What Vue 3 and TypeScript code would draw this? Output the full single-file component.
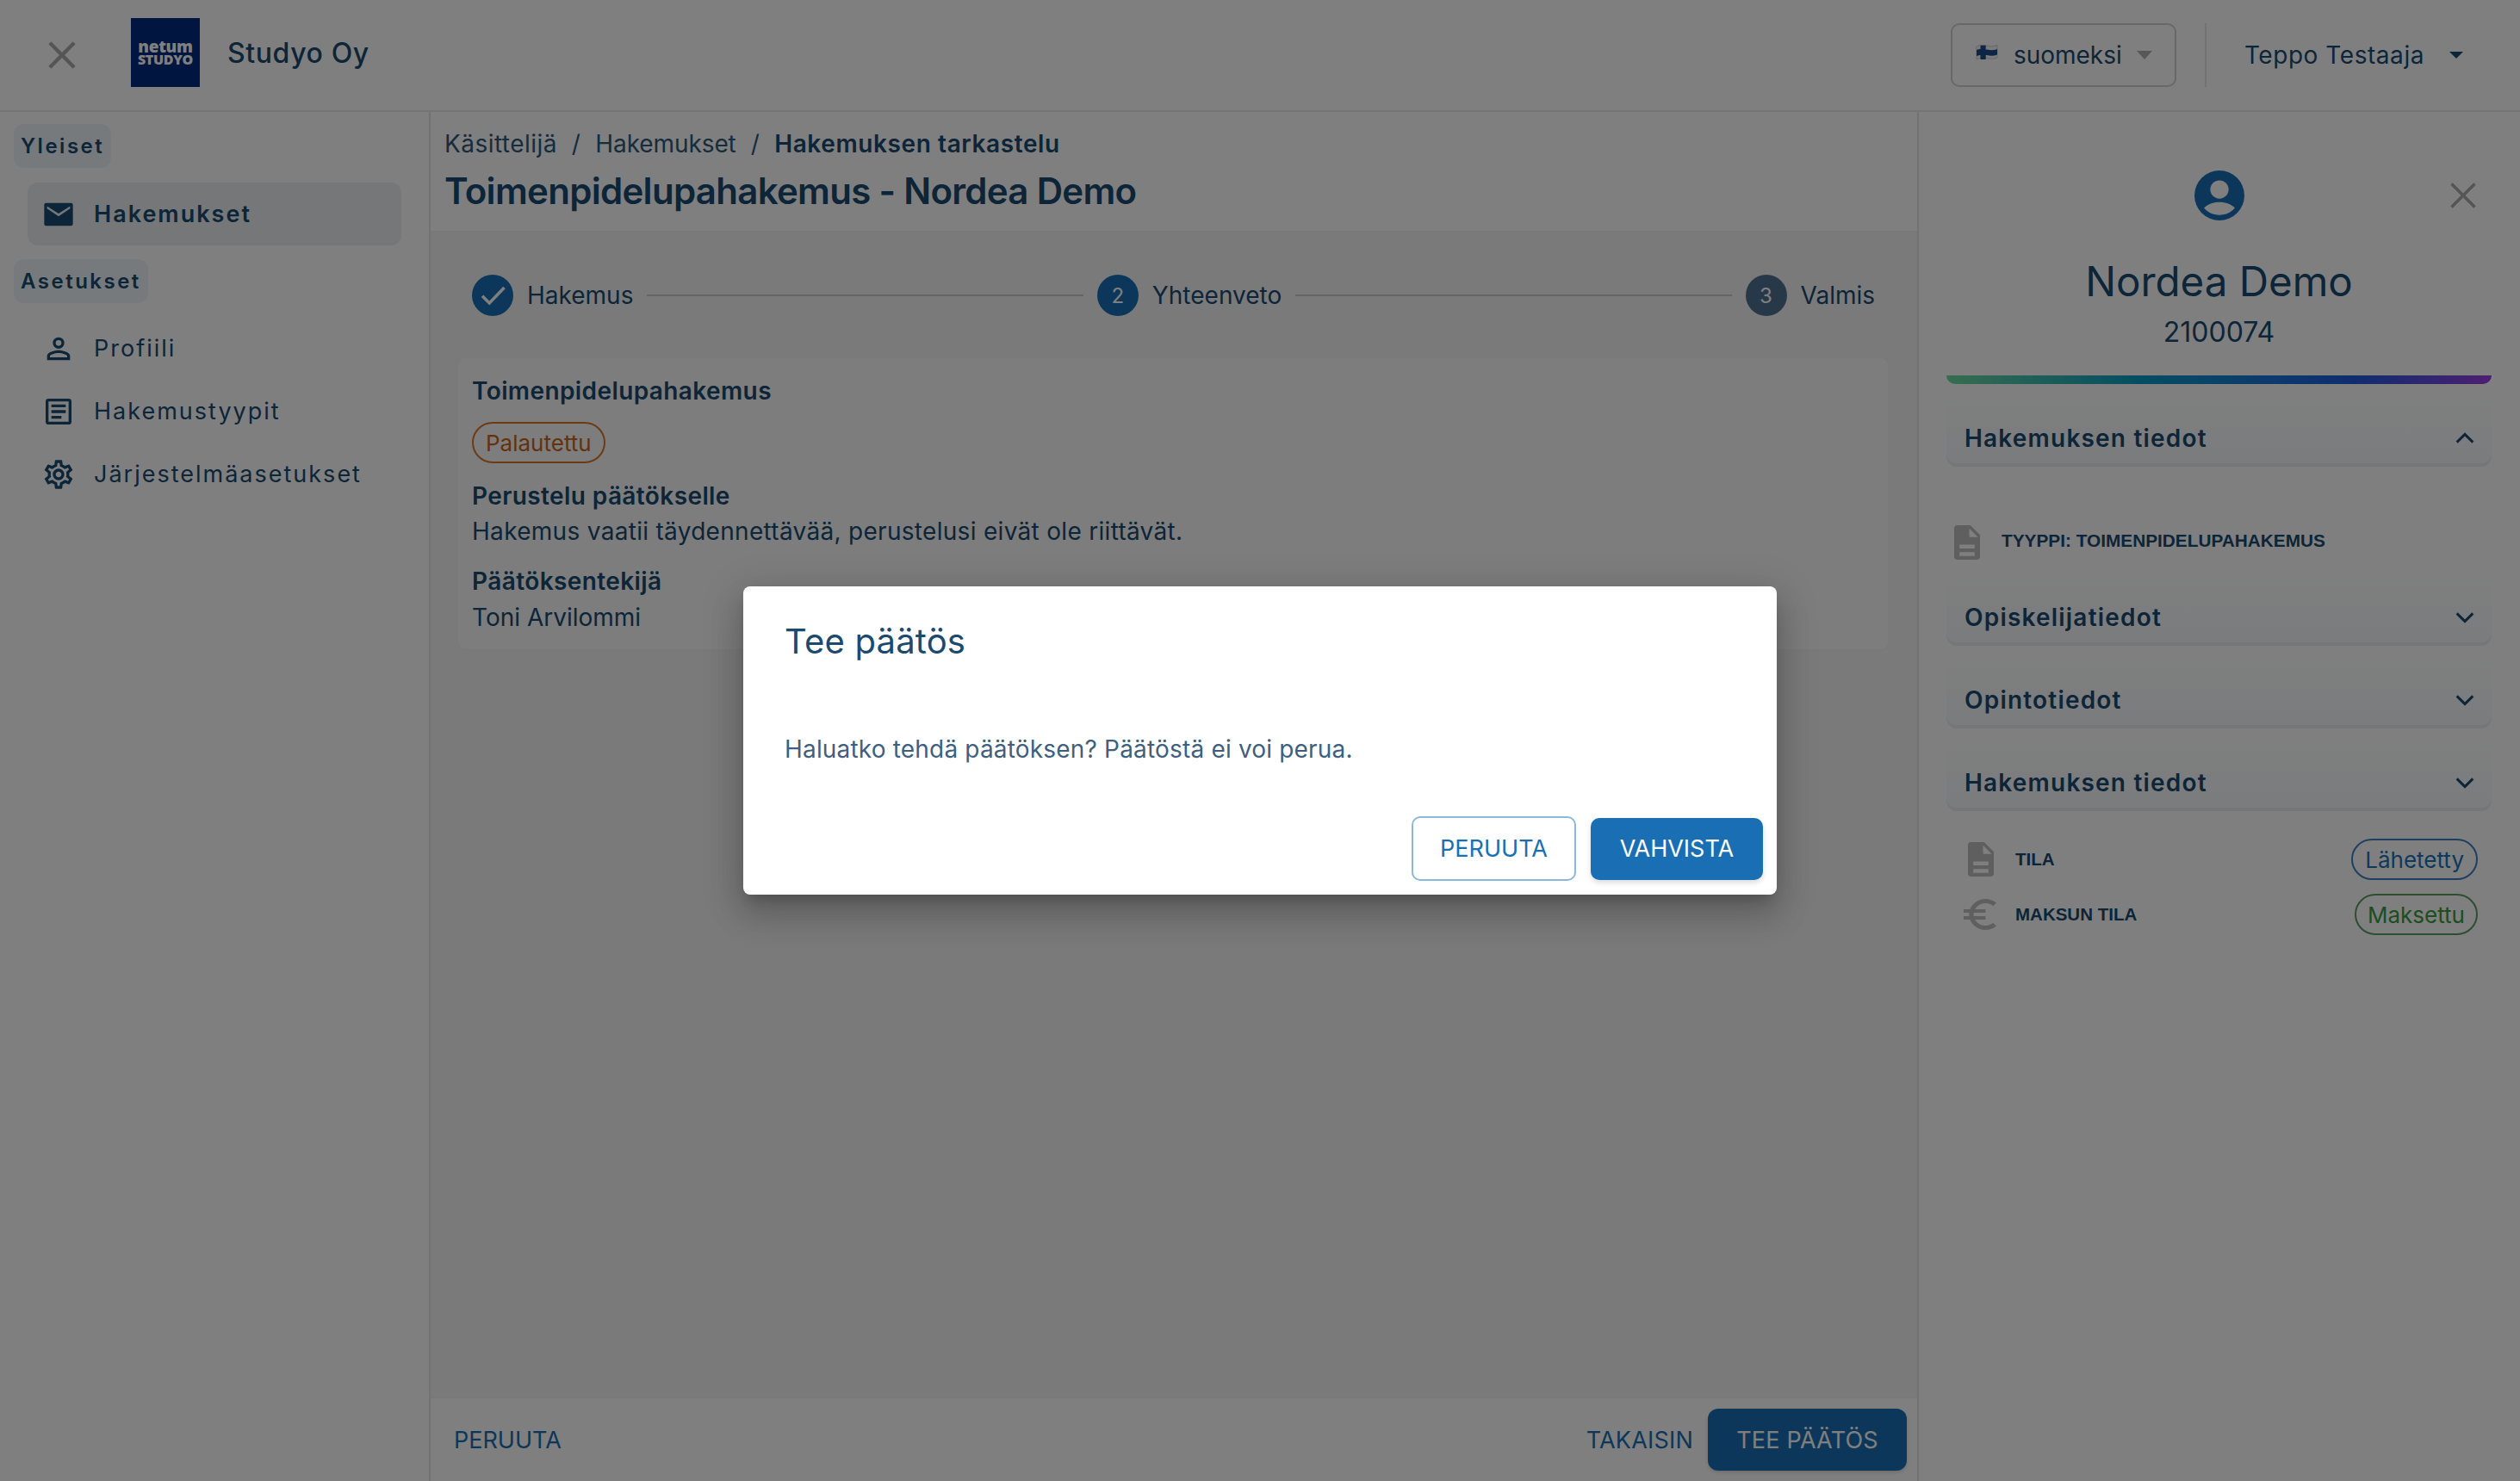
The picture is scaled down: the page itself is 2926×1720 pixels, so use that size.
<script setup lang="ts">
const sections: string[] = ['Opiskelijatiedot', 'Opintotiedot'];
</script>

<template>
  <div class="page">
    <header class="topbar">
      <div class="brand">
        <svg class="menu-x" viewBox="0 0 24 24"><path d="M3.500 3.500 20.500 20.500M20.500 3.500 3.500 20.500" /></svg>
        <div class="logo"><span class="logo-a">netum</span><span class="logo-b">STUDYO</span></div>
        <span class="org">Studyo Oy</span>
      </div>
      <div class="top-right">
        <div class="lang">
          <svg class="flag" viewBox="0 0 24 18"><path d="M0 2c4-2 8-2 12-.800S20 2 24 .5V15c-4 1.700-8 1.700-12 .500S4 15 0 17z" fill="#f6f6f6" stroke="#b4b4b4" stroke-width=".6" /><path d="M0 6c4-1.500 8-1.500 12-.500S20 6.500 24 5v6.500c-4 1.500-8 1.500-12 .500S4 11.500 0 13zM4.500.8h6.200v16.200H4.500z" fill="#1c4a8c" /></svg>
          <span>suomeksi</span>
          <i class="caret grey"></i>
        </div>
        <div class="vr"></div>
        <div class="user"><span>Teppo Testaaja</span><i class="caret dark"></i></div>
      </div>
    </header>

    <div class="body">
      <aside class="side">
        <div class="group-label">Yleiset</div>
        <div class="nav active">
          <svg viewBox="-2 -2 36 36" class="nav-ic"><path fill="#1b4a70" d="M3 4h26a2 2 0 0 1 2 2v20a2 2 0 0 1-2 2H3a2 2 0 0 1-2-2V6a2 2 0 0 1 2-2zm1 6 12 8 12-8V7.500L16 15 4 7.500z" /></svg>
          <span>Hakemukset</span>
        </div>
        <div class="group-label second">Asetukset</div>
        <div class="nav">
          <svg viewBox="0 0 24 24" class="nav-ic"><path fill="#1b4a70" d="M12 6a2 2 0 1 1 0 4 2 2 0 0 1 0-4m0 9c2.700 0 5.800 1.290 6 2v1H6v-1c.2-.71 3.300-2 6-2M12 4a4 4 0 1 0 0 8 4 4 0 0 0 0-8zm0 9c-2.670 0-8 1.340-8 4v3h16v-3c0-2.660-5.330-4-8-4z" /></svg>
          <span>Profiili</span>
        </div>
        <div class="nav">
          <svg viewBox="0 0 24 24" class="nav-ic"><path fill="#1b4a70" d="M19 5v14H5V5h14m0-2H5a2 2 0 0 0-2 2v14a2 2 0 0 0 2 2h14a2 2 0 0 0 2-2V5a2 2 0 0 0-2-2zM7 7h10v2H7zm0 4h10v2H7zm0 4h7v2H7z" /></svg>
          <span>Hakemustyypit</span>
        </div>
        <div class="nav">
          <svg viewBox="0 0 24 24" class="nav-ic"><path fill="#1b4a70" d="M19.430 12.980c.04-.32.07-.64.07-.98s-.03-.66-.07-.98l2.110-1.650c.19-.15.240-.42.120-.64l-2-3.460c-.12-.22-.39-.3-.61-.22l-2.490 1c-.52-.4-1.080-.73-1.690-.98l-.38-2.650A.488.488 0 0 0 14 2h-4c-.25 0-.46.18-.49.42l-.38 2.650c-.61.25-1.170.59-1.690.98l-2.490-1a.566.566 0 0 0-.61.22l-2 3.460c-.13.22-.07.49.12.64l2.110 1.650c-.04.32-.07.65-.07.98s.03.66.07.98l-2.110 1.650c-.19.15-.24.42-.12.64l2 3.460c.12.22.39.3.61.22l2.490-1c.52.4 1.080.73 1.690.98l.38 2.650c.03.24.24.42.49.42h4c.25 0 .46-.18.49-.42l.38-2.650c.61-.25 1.170-.59 1.690-.98l2.490 1c.23.09.49 0 .61-.22l2-3.460c.12-.22.07-.49-.12-.64l-2.110-1.650zM17.450 11.270c.04.31.05.52.05.73 0 .21-.02.43-.05.73l-.14 1.130.89.7 1.080.84-.7 1.210-1.270-.51-1.040-.42-.9.68c-.43.32-.84.56-1.250.73l-1.060.43-.16 1.130-.2 1.350h-1.400l-.19-1.350-.16-1.130-1.060-.43c-.43-.18-.83-.41-1.230-.71l-.91-.7-1.060.43-1.270.51-.7-1.210 1.080-.84.89-.7-.14-1.130c-.03-.31-.05-.54-.05-.74s.02-.43.05-.73l.14-1.130-.89-.7-1.080-.84.7-1.210 1.270.51 1.040.42.9-.68c.43-.32.84-.56 1.250-.73l1.060-.43.16-1.130.2-1.350h1.390l.19 1.350.16 1.130 1.060.43c.43.18.83.41 1.230.71l.91.7 1.060-.43 1.270-.51.7 1.210-1.070.85-.89.7.14 1.130zM12 8c-2.210 0-4 1.790-4 4s1.790 4 4 4 4-1.790 4-4-1.790-4-4-4zm0 6c-1.100 0-2-.9-2-2s.9-2 2-2 2 .9 2 2-.9 2-2 2z" /></svg>
          <span>Järjestelmäasetukset</span>
        </div>
      </aside>

      <main class="main">
        <div class="title-block">
          <nav class="crumbs">
            <span>Käsittelijä</span><span class="slash">/</span><span class="crumb-mid">Hakemukset</span><span class="slash">/</span><b>Hakemuksen tarkastelu</b>
          </nav>
          <h1>Toimenpidelupahakemus - Nordea Demo</h1>
        </div>

        <div class="content">
          <div class="stepper">
            <span class="dot done"><svg viewBox="0 0 24 24"><path d="M4 12.500l5.500 5.500L21 6" /></svg></span>
            <span class="step-label">Hakemus</span>
            <span class="line"></span>
            <span class="dot cur">2</span>
            <span class="step-label">Yhteenveto</span>
            <span class="line"></span>
            <span class="dot next">3</span>
            <span class="step-label">Valmis</span>
          </div>

          <section class="card">
            <div class="card-title">Toimenpidelupahakemus</div>
            <span class="chip chip-orange">Palautettu</span>
            <div class="field-title">Perustelu päätökselle</div>
            <div class="field-text">Hakemus vaatii täydennettävää, perustelusi eivät ole riittävät.</div>
            <div class="field-title maker">Päätöksentekijä</div>
            <div class="field-text toni">Toni Arvilommi</div>
          </section>
        </div>

        <footer class="actions">
          <span class="txt-btn">PERUUTA</span>
          <div class="actions-right">
            <span class="txt-btn">TAKAISIN</span>
            <span class="solid-btn">TEE PÄÄTÖS</span>
          </div>
        </footer>
      </main>

      <aside class="panel">
        <div class="panel-head">
          <svg class="avatar" viewBox="0 0 60 60"><circle cx="30" cy="30" r="30" fill="#1a6fb4" /><circle cx="30" cy="22.800" r="11" fill="#fff" /><path d="M11.500 45c4-4.500 11-7 18.500-7s14.500 2.500 18.500 7c-4 5-11 8.500-18.500 8.500S15.500 50 11.500 45z" fill="#fff" /></svg>
          <svg class="panel-x" viewBox="0 0 24 24"><path d="M3 3 21 21M21 3 3 21" /></svg>
        </div>
        <div class="p-name">Nordea Demo</div>
        <div class="p-num">2100074</div>
        <div class="grad"></div>

        <div class="acc first">
          <span>Hakemuksen tiedot</span>
          <svg viewBox="0 0 24 24" class="chev"><path d="M4 16l8-8 8 8" /></svg>
        </div>
        <div class="type-row">
          <svg viewBox="0 0 24 32" class="doc"><path d="M3 0h12l9 9v20a3 3 0 0 1-3 3H3a3 3 0 0 1-3-3V3a3 3 0 0 1 3-3zm11 3v8h8zM5 18v3.500h14V18zm0 7v3.500h14V25z" fill-rule="evenodd" /></svg>
          <span class="type-text">TYYPPI: TOIMENPIDELUPAHAKEMUS</span>
        </div>
        <div v-for="s in sections" :key="s" class="acc">
          <span>{{ s }}</span>
          <svg viewBox="0 0 24 24" class="chev"><path d="M4 8l8 8 8-8" /></svg>
        </div>
        <div class="acc">
          <span>Hakemuksen tiedot</span>
          <svg viewBox="0 0 24 24" class="chev"><path d="M4 8l8 8 8-8" /></svg>
        </div>
        <div class="status-row top">
          <svg viewBox="0 0 24 32" class="doc"><path d="M3 0h12l9 9v20a3 3 0 0 1-3 3H3a3 3 0 0 1-3-3V3a3 3 0 0 1 3-3zm11 3v8h8zM5 18v3.500h14V18zm0 7v3.500h14V25z" fill-rule="evenodd" /></svg>
          <span class="st-label">TILA</span>
          <span class="chip chip-blue">Lähetetty</span>
        </div>
        <div class="status-row">
          <svg viewBox="3 3 18 18" preserveAspectRatio="none" class="euro"><path d="M15 18.500c-2.510 0-4.680-1.420-5.760-3.500H15v-2H8.580c-.05-.33-.08-.66-.08-1s.03-.67.08-1H15V9H9.240C10.320 6.920 12.500 5.500 15 5.500c1.610 0 3.090.59 4.230 1.570L21 5.300C19.410 3.870 17.300 3 15 3c-3.920 0-7.240 2.510-8.480 6H3v2h3.060c-.04.330-.06.66-.06 1 0 .34.02.67.06 1H3v2h3.520c1.240 3.490 4.560 6 8.480 6 2.310 0 4.410-.87 6-2.300l-1.780-1.770c-1.130.98-2.600 1.570-4.220 1.570z" /></svg>
          <span class="st-label euro-label">MAKSUN TILA</span>
          <span class="chip chip-green">Maksettu</span>
        </div>
      </aside>
    </div>

    <div class="scrim"></div>

    <div class="dialog" role="dialog">
      <h2>Tee päätös</h2>
      <p>Haluatko tehdä päätöksen? Päätöstä ei voi perua.</p>
      <div class="dialog-actions">
        <button class="btn-outline">PERUUTA</button>
        <button class="btn-primary">VAHVISTA</button>
      </div>
    </div>
  </div>
</template>

<style>
html, body { margin: 0; padding: 0; background: #fff; }
</style>

<style scoped>
* { box-sizing: border-box; }
.page {
  position: relative;
  width: 2926px;
  height: 1720px;
  overflow: hidden;
  background: #fff;
  color: #1b4a70;
  font-family: Inter, "Liberation Sans", sans-serif;
  font-size: 28px;
  display: flex;
  flex-direction: column;
}
.topbar {
  height: 130px;
  flex: none;
  display: flex;
  justify-content: space-between;
  align-items: center;
  border-bottom: 2px solid #e8e8e8;
  padding: 0 66px 0 52px;
}
.brand { display: flex; align-items: center; margin-top: -6px; }
.menu-x { width: 40px; height: 40px; margin-top: 6px; }
.menu-x path { fill: none; stroke: #ababab; stroke-width: 2.600; }
.logo {
  width: 80px; height: 80px; margin-left: 60px; background: #002a80;
  display: flex; flex-direction: column; align-items: center; justify-content: center;
  color: #fff; font-family: "Open Sans", sans-serif; font-weight: 800;
}
.logo-a { font-size: 19px; line-height: 16px; letter-spacing: -.3px; }
.logo-b { font-size: 16px; line-height: 15px; letter-spacing: -.3px; }
.org { margin-left: 32px; font-size: 32px; font-weight: 500; letter-spacing: .6px; }
.top-right { display: flex; align-items: center; }
.lang {
  width: 262px; height: 74px; border: 2px solid #d0d0d0; border-radius: 10px;
  display: flex; align-items: center; padding-left: 28px;
}
.flag { width: 24px; height: 18px; margin-right: 19px; margin-top: -6px; flex: none; overflow: visible; }
.caret { width: 0; height: 0; display: block; border-style: solid; border-color: transparent; border-bottom-width: 0; }
.caret.grey { border-width: 10px 9px 0; border-top-color: #b0b0b0; margin-left: 17px; }
.caret.dark { border-width: 8px 8px 0; border-top-color: #1b4a70; margin-left: 29px; }
.vr { width: 2px; height: 74px; background: #e4e4e4; margin: 0 44px 0 33px; }
.user { display: flex; align-items: center; letter-spacing: .55px; }
.body { flex: 1; display: flex; min-height: 0; }
.side {
  width: 500px; flex: none; border-right: 2px solid #e4e4e4; padding: 14px 32px 0 16px;
}
.group-label {
  display: block; width: fit-content; height: 51px; line-height: 51px; padding: 0 8px;
  background: #eef4f8; border-radius: 12px; font-size: 24px; font-weight: 600; letter-spacing: 2.500px;
}
.group-label.second { margin-top: 16px; }
.nav {
  height: 73px; margin: 0 0 0 16px; display: flex; align-items: center; padding-left: 16px;
  letter-spacing: 2px; font-size: 27px;
}
.nav.active {
  margin-top: 17px; background: #ebeef2; border-radius: 12px; font-weight: 600;
}
.group-label.second + .nav { margin-top: 16px; }
.nav-ic { width: 40px; height: 40px; margin-right: 21px; flex: none; }
.main { flex: 1; min-width: 0; display: flex; flex-direction: column; }
.title-block { height: 140px; background: #fff; padding: 18px 16px 0 16px; flex: none; border-bottom: 2px solid #f0f0f0; }
.crumbs { display: flex; align-items: center; height: 38px; color: #2f5878; font-size: 28px; letter-spacing: .45px; }
.crumb-mid { letter-spacing: -.1px; }
.crumbs b { font-weight: 600; color: #1b4a70; letter-spacing: .6px; }
.slash { margin: 0 17px; }
h1 { margin: 8px 0 0; font-size: 42px; font-weight: 600; line-height: 56px; letter-spacing: -.7px; }
.content { flex: 1; background: #f5f5f5; padding: 0 34px 0 32px; }
.stepper { display: flex; align-items: center; height: 146px; padding: 0 15px 0 16px; gap: 16px; }
.dot {
  width: 48px; height: 48px; border-radius: 50%; flex: none; display: flex; align-items: center; justify-content: center;
  color: #fff; font-size: 24px;
}
.dot svg { width: 36px; height: 36px; }
.dot svg path { fill: none; stroke: #fff; stroke-width: 2.400; }
.dot.done, .dot.cur { background: #1a6fb4; }
.dot.next { background: #4f7390; }
.step-label { font-size: 28px; }
.line { flex: 1; height: 2px; background: #c8c8c8; }
.card {
  background: #fafafa; border-radius: 8px; padding: 18px 16px 16px; height: 338px;
  box-shadow: 0 0 2px rgba(0,0,0,.06);
}
.card-title, .field-title { font-weight: 600; line-height: 40px; letter-spacing: .4px; }
.chip {
  display: flex; align-items: center; width: fit-content; height: 48px; padding: 0 14px; border-radius: 24px;
  border: 2px solid; font-size: 26px; background: transparent;
}
.chip-orange { color: #c8641a; border-color: #d9772a; margin-top: 16px; }
.chip-blue { color: #1a73b8; border-color: #3a80c0; margin-left: auto; }
.chip-green { color: #3a9a44; border-color: #5a9c60; margin-left: auto; padding: 0 13px; }
.field-title { margin-top: 18px; }
.field-title.maker { margin-top: 17px; }
.field-text { line-height: 42px; letter-spacing: .3px; }
.field-text.toni { margin-top: 1px; letter-spacing: 0; }
.actions {
  height: 98px; flex: none; background: #fff; border-top: 2px solid #f0f0f0;
  display: flex; align-items: center; justify-content: space-between; padding: 0 12px 0 27px;
}
.actions-right { display: flex; align-items: center; gap: 17px; }
.txt-btn { color: #1a6fb4; font-size: 27px; letter-spacing: 0; }
.actions-right .txt-btn { letter-spacing: .2px; }
.solid-btn {
  height: 72px; width: 231px; display: flex; align-items: center; justify-content: center;
  background: #1a6fb4; color: #fff; border-radius: 12px; font-size: 27px; letter-spacing: .2px; box-shadow: 0 2px 4px rgba(0,0,0,.15);
}
.panel { width: 700px; flex: none; border-left: 2px solid #e4e4e4; padding: 0 33px 0 32px; }
.panel-head { position: relative; height: 124px; padding-top: 68px; display: flex; justify-content: center; }
.avatar { width: 58px; height: 58px; }
.panel-x { position: absolute; top: 79px; right: 15px; width: 36px; height: 36px; }
.panel-x path { fill: none; stroke: #ababab; stroke-width: 2.400; }
.p-name { text-align: center; font-size: 47.500px; font-weight: 400; margin-top: 42px; line-height: 62px; }
.p-num { text-align: center; font-size: 32px; margin-top: 6px; line-height: 44px; }
.grad {
  height: 10px; margin-top: 28px; border-radius: 0 0 10px 10px;
  background: linear-gradient(90deg, #6edba0 0%, #0a9bc4 35%, #1a73d8 60%, #1e5bdc 75%, #9b3fe0 100%);
}
.acc {
  height: 80px; margin-top: 16px; display: flex; align-items: center; justify-content: space-between;
  padding: 14px 17px 0 21px; font-weight: 600; letter-spacing: 1.200px;
  background: linear-gradient(180deg, #fdfefe, #f6f8fb);
  border-radius: 0 0 12px 12px; box-shadow: inset 0 -4px 0 rgba(0,0,0,.04);
}
.chev { width: 28px; height: 28px; flex: none; }
.chev path { fill: none; stroke: #1b4a70; stroke-width: 2.600; }
.type-row { display: flex; align-items: center; gap: 24px; height: 112px; padding: 64px 0 0 8px; font-family: "Liberation Sans", sans-serif; font-size: 20.800px; font-weight: 700; }
.type-text { margin-bottom: 4px; }
.doc { width: 32px; height: 40px; fill: #bebec0; flex: none; }
.status-row { display: flex; align-items: center; height: 64px; padding: 0 16px 0 24px; font-family: "Liberation Sans", sans-serif; }
.status-row.top { margin-top: 24px; }
.status-row .chip { font-family: Inter, sans-serif; }
.st-label { margin-left: 24px; font-size: 20.500px; font-weight: 700; }
.euro { width: 38px; height: 36px; flex: none; margin-left: -4px; fill: #bebec0; }
.euro-label { margin-left: 22px; }
.scrim { position: absolute; inset: 0; background: rgba(0,0,0,.5); }
.dialog {
  position: absolute; left: 863px; top: 681px; width: 1200px; height: 358px;
  background: #fff; border-radius: 8px; box-shadow: 0 11px 15px -7px rgba(0,0,0,.2), 0 24px 38px 3px rgba(0,0,0,.14), 0 9px 46px 8px rgba(0,0,0,.12);
  padding: 40px 16px 0 48px; display: flex; flex-direction: column;
}
h2 { margin: 0; font-size: 40px; font-weight: 400; line-height: 48px; letter-spacing: .2px; }
.dialog p { margin: 81px 0 0; line-height: 40px; color: #3f5f80; letter-spacing: .18px; }
.dialog-actions { display: flex; justify-content: flex-end; gap: 17px; margin-top: 58px; align-items: center; }
button { font: inherit; font-size: 27px; border-radius: 10px; letter-spacing: 0; }
.btn-outline { width: 191px; height: 75px; background: #fff; color: #1a6fb4; border: 2px solid #8bb8dc; }
.btn-primary { width: 200px; height: 72px; background: #1a6fb4; color: #fff; border: 0; box-shadow: 0 3px 6px rgba(0,0,0,.15); }
</style>
